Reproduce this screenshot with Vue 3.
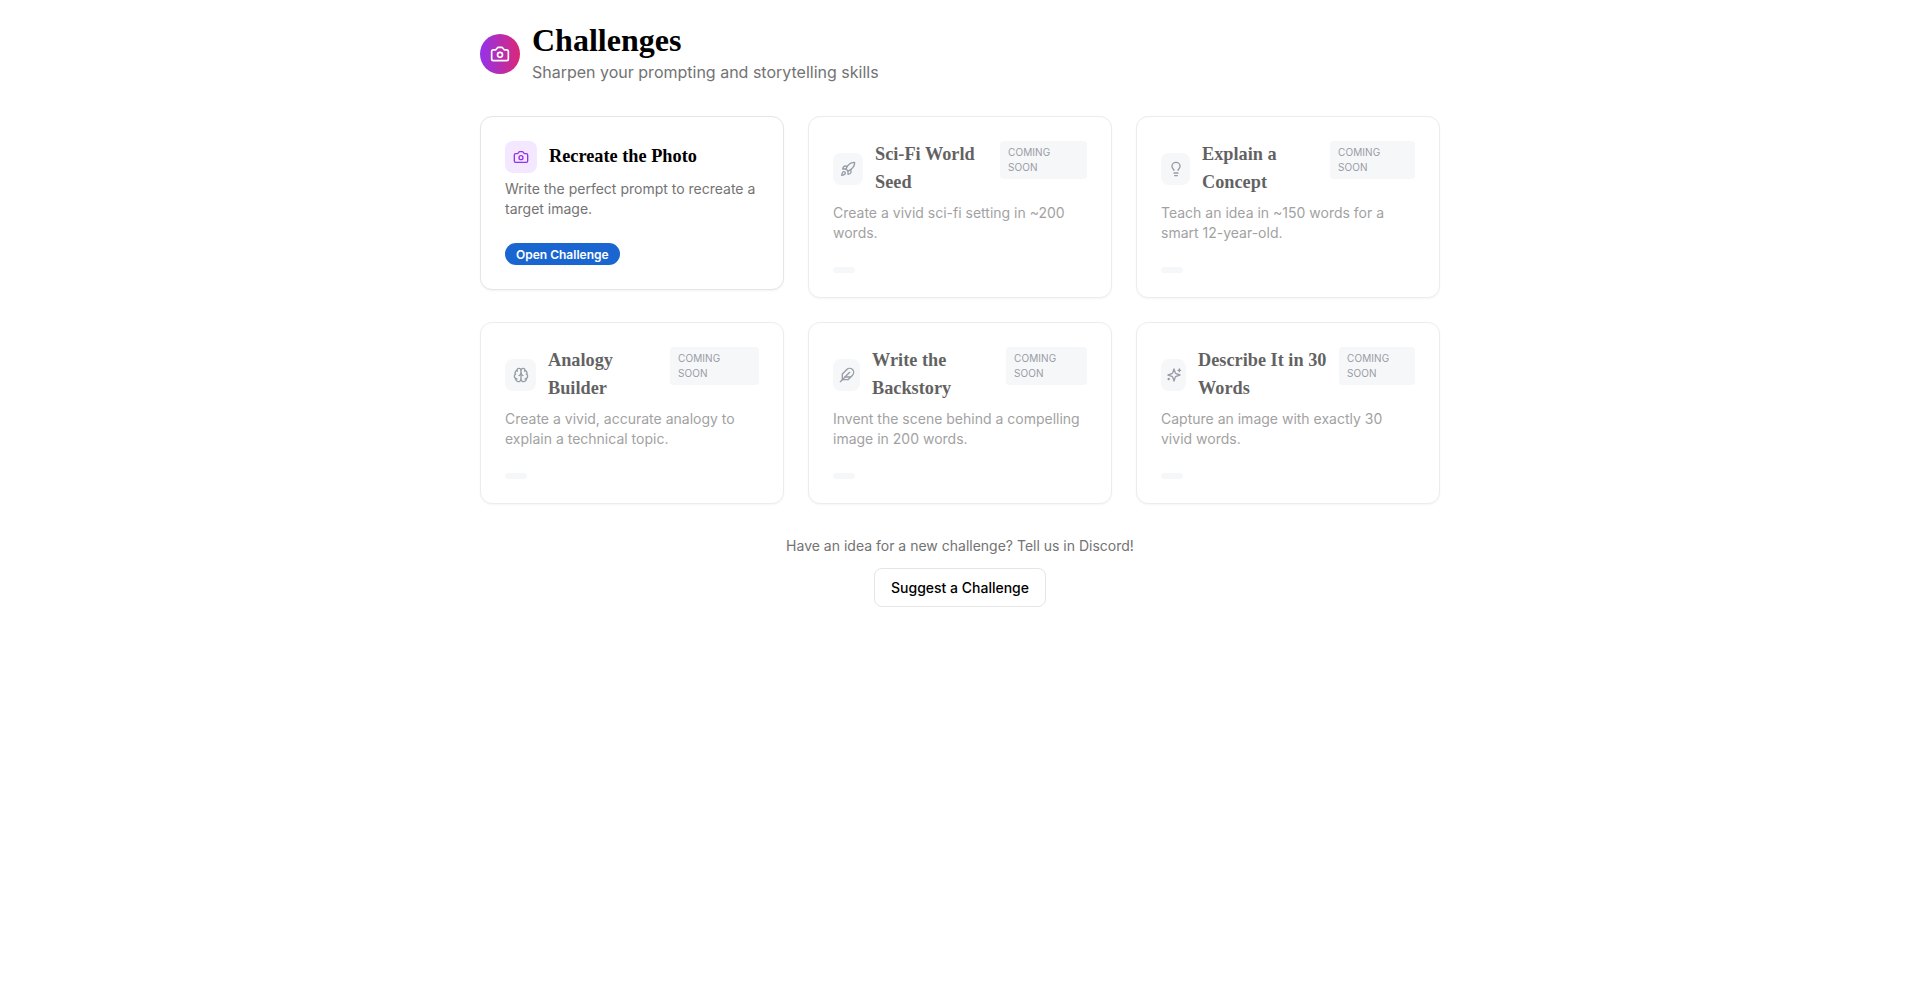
<script setup>
const icons = {
    camera: [
        "M14.5 4h-5L7 7H4a2 2 0 0 0-2 2v9a2 2 0 0 0 2 2h16a2 2 0 0 0 2-2V9a2 2 0 0 0-2-2h-3l-2.5-3z",
        "M12 10a3 3 0 1 0 0 6a3 3 0 0 0 0-6z"
    ],
    rocket: [
        "M4.5 16.5c-1.5 1.26-2 5-2 5s3.74-.5 5-2c.71-.84.7-2.13-.09-2.91a2.18 2.18 0 0 0-2.91-.09z",
        "m12 15-3-3a22 22 0 0 1 2-3.95A12.88 12.88 0 0 1 22 2c0 2.72-.78 7.5-6 11a22.35 22.35 0 0 1-4 2z",
        "M9 12H4s.55-3.03 2-4c1.62-1.08 5 0 5 0",
        "M12 15v5s3.03-.55 4-2c1.08-1.62 0-5 0-5"
    ],
    bulb: [
        "M15 14c.2-1 .7-1.7 1.5-2.5 1-.9 1.5-2.2 1.5-3.5A6 6 0 0 0 6 8c0 1 .2 2.2 1.5 3.5.7.7 1.3 1.5 1.5 2.5",
        "M9 18h6",
        "M10 22h4"
    ],
    brain: [
        "M12 18V5",
        "M15 13a4.17 4.17 0 0 1-3-4 4.17 4.17 0 0 1-3 4",
        "M17.598 6.5A3 3 0 1 0 12 5a3 3 0 1 0-5.598 1.5",
        "M17.997 5.125a4 4 0 0 1 2.526 5.77",
        "M18 18a4 4 0 0 0 2-7.464",
        "M19.967 17.483A4 4 0 1 1 12 18a4 4 0 1 1-7.967-.517",
        "M6 18a4 4 0 0 1-2-7.464",
        "M6.003 5.125a4 4 0 0 0-2.526 5.77"
    ],
    feather: [
        "M20.24 12.24a6 6 0 0 0-8.49-8.49L5 10.5V19h8.5z",
        "M16 8 2 22",
        "M17.5 15H9"
    ],
    sparkles: [
        "m12 3-1.912 5.813a2 2 0 0 1-1.275 1.275L3 12l5.813 1.912a2 2 0 0 1 1.275 1.275L12 21l1.912-5.813a2 2 0 0 1 1.275-1.275L21 12l-5.813-1.912a2 2 0 0 1-1.275-1.275L12 3Z",
        "M20 3v4",
        "M22 5h-4",
        "M4 17v2",
        "M5 18H3"
    ]
};

const challenges = [
    {title: "Recreate the Photo", text: "Write the perfect prompt to recreate a target image.", icon: "camera", open: true},
    {title: "Sci-Fi World Seed", text: "Create a vivid sci-fi setting in ~200 words.", icon: "rocket", iconWidth: 30, badgeWidth: 87},
    {title: "Explain a Concept", text: "Teach an idea in ~150 words for a smart 12-year-old.", icon: "bulb", iconWidth: 29, badgeWidth: 85},
    {title: "Analogy Builder", text: "Create a vivid, accurate analogy to explain a technical topic.", icon: "brain", iconWidth: 31, badgeWidth: 89},
    {title: "Write the Backstory", text: "Invent the scene behind a compelling image in 200 words.", icon: "feather", iconWidth: 27, badgeWidth: 81},
    {title: "Describe It in 30 Words", text: "Capture an image with exactly 30 vivid words.", icon: "sparkles", iconWidth: 25, badgeWidth: 76}
];
</script>

<template>
    <div class="page">
        <header class="header">
            <div class="logo">
                <svg class="icon-lg" viewBox="0 0 24 24">
                    <path v-for="d in icons.camera" :key="d" :d="d"/>
                </svg>
            </div>
            <div>
                <h1 class="heading">Challenges</h1>
                <p class="subheading">Sharpen your prompting and storytelling skills</p>
            </div>
        </header>

        <div class="grid">
            <article v-for="c in challenges" :key="c.title" class="card" :class="{soon: !c.open}">
                <div class="card-top">
                    <div class="card-icon" :style="c.iconWidth ? {width: c.iconWidth + 'px'} : null">
                        <svg class="icon" viewBox="0 0 24 24">
                            <path v-for="d in icons[c.icon]" :key="d" :d="d"/>
                        </svg>
                    </div>
                    <h2 class="card-title">{{ c.title }}</h2>
                    <span v-if="!c.open" class="badge" :style="{width: c.badgeWidth + 'px'}">Coming soon</span>
                </div>
                <p class="card-text">{{ c.text }}</p>
                <button v-if="c.open" class="open-btn">Open Challenge</button>
                <div v-else class="placeholder"></div>
            </article>
        </div>

        <footer class="footer">
            <p class="footer-text">Have an idea for a new challenge? Tell us in Discord!</p>
            <button class="suggest-btn">Suggest a Challenge</button>
        </footer>
    </div>
</template>

<style scoped>
.page {
    width: 960px;
    margin: 0 auto;
    padding-top: 24px;
    font-family: Inter, "Liberation Sans", sans-serif;
}

.header {
    display: flex;
    align-items: center;
    gap: 12px;
    height: 60px;
    margin-bottom: 32px;
}

.logo {
    width: 40px;
    height: 40px;
    flex-shrink: 0;
    border-radius: 50%;
    display: flex;
    align-items: center;
    justify-content: center;
    background: linear-gradient(90deg, #9333ea, #db2777);
    color: #ffffff;
}

.icon-lg {
    width: 20px;
    height: 20px;
    fill: none;
    stroke: currentColor;
    stroke-width: 2;
    stroke-linecap: round;
    stroke-linejoin: round;
}

.icon {
    width: 16px;
    height: 16px;
    flex-shrink: 0;
    fill: none;
    stroke: currentColor;
    stroke-width: 2;
    stroke-linecap: round;
    stroke-linejoin: round;
}

.heading {
    margin: -2px 0 2px;
    font-family: "Liberation Serif", serif;
    font-size: 32px;
    font-weight: 700;
    line-height: 36px;
    color: #000000;
}

.subheading {
    margin: 0;
    font-size: 16px;
    line-height: 24px;
    color: #737373;
}

.grid {
    display: grid;
    grid-template-columns: repeat(3, 304px);
    gap: 24px;
    align-items: start;
}

.card {
    box-sizing: border-box;
    padding: 24px;
    background: #ffffff;
    border: 1px solid #e5e5e5;
    border-radius: 12px;
    box-shadow: 0 1px 2px rgba(0, 0, 0, 0.05);
}

.card.soon {
    opacity: 0.7;
}

.card-top {
    display: flex;
    align-items: center;
    gap: 12px;
}

.card-icon {
    width: 32px;
    height: 32px;
    flex-shrink: 0;
    border-radius: 8px;
    display: flex;
    align-items: center;
    justify-content: center;
    background: #f3e8ff;
    color: #9333ea;
}

.soon .card-icon {
    background: #f3f4f6;
    color: #6b7280;
}

.card-title {
    flex: 1;
    min-width: 0;
    margin: -1px 0 1px;
    font-family: "Liberation Serif", serif;
    font-size: 18.3px;
    font-weight: 700;
    line-height: 28px;
    color: #000000;
}

.soon .card-title {
    color: #1f1f1f;
}

.badge {
    box-sizing: border-box;
    align-self: flex-start;
    flex-shrink: 0;
    padding: 4px 8px;
    border-radius: 4px;
    background: #f3f4f6;
    font-size: 10px;
    font-weight: 400;
    letter-spacing: 0.1px;
    line-height: 15px;
    text-transform: uppercase;
    color: #6b7280;
}

.card-text {
    margin: 6px 0 0;
    font-size: 14px;
    line-height: 20px;
    color: #737373;
}

.soon .card-text {
    color: #7a7a7a;
}

.open-btn {
    display: block;
    height: 22px;
    margin-top: 24px;
    padding: 0 11px;
    border: 0;
    border-radius: 11px;
    background: #1a66d1;
    font-family: inherit;
    font-size: 12px;
    font-weight: 600;
    color: #ffffff;
}

.placeholder {
    width: 22px;
    height: 6px;
    margin-top: 24px;
    border-radius: 3px;
    background: #f3f4f6;
}

.footer {
    margin-top: 32px;
    display: flex;
    flex-direction: column;
    align-items: center;
    gap: 12px;
}

.footer-text {
    margin: 0;
    font-size: 14px;
    line-height: 20px;
    color: #737373;
}

.suggest-btn {
    width: 172px;
    height: 39px;
    background: #ffffff;
    border: 1px solid #e5e5e5;
    border-radius: 8px;
    font-family: inherit;
    font-size: 14px;
    font-weight: 500;
    color: #000000;
}
</style>
